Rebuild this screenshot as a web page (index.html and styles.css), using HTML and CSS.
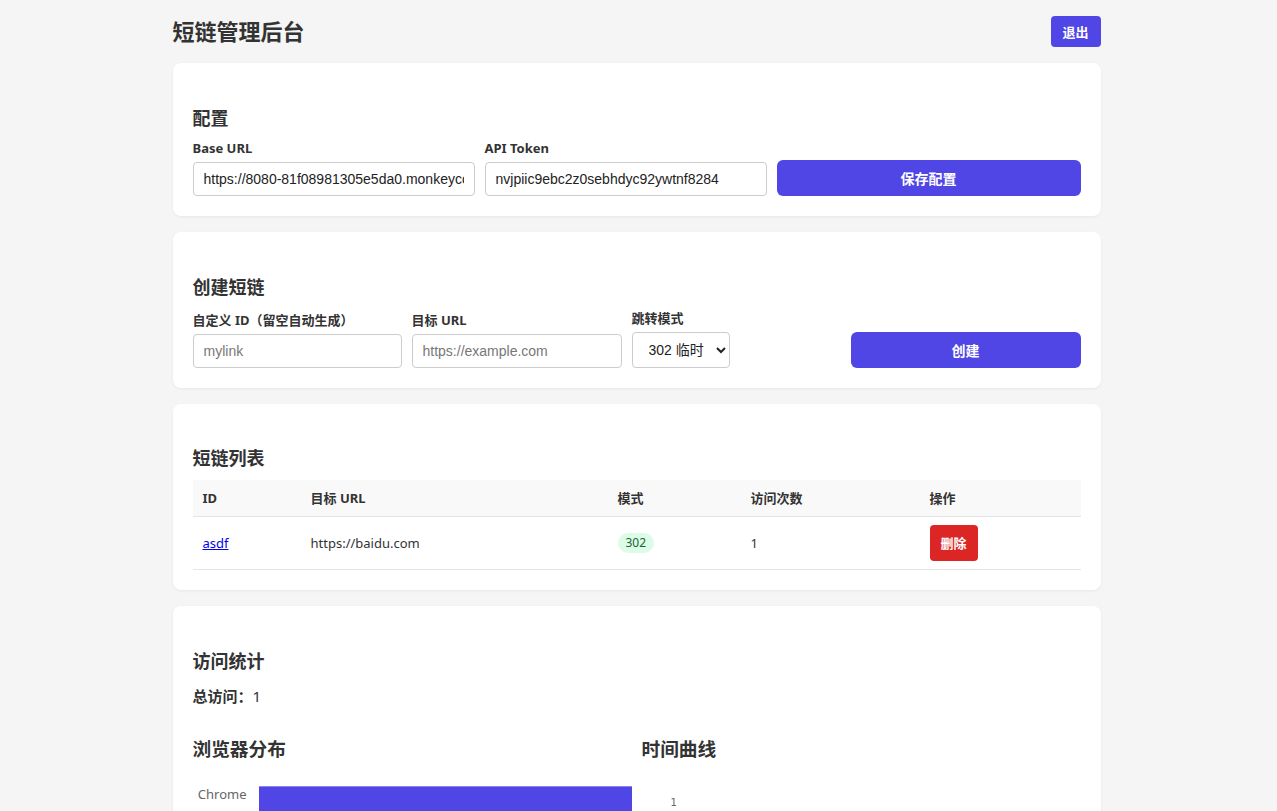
FILE: index.html
```html
<!DOCTYPE html>
<html lang="zh-CN">
<head>
    <meta charset="UTF-8">
    <meta name="viewport" content="width=device-width, initial-scale=1.0">
    <title>短链管理后台</title>
    <link rel="stylesheet" href="styles.css">
</head>
<body>
    <div class="container">
        <header class="top-bar">
            <h1>短链管理后台</h1>
            <button class="btn btn-small">退出</button>
        </header>

        <!-- 配置 -->
        <section class="card">
            <h2>配置</h2>
            <div class="form-row config-row">
                <div class="field">
                    <label>Base URL</label>
                    <input type="text" value="https://8080-81f08981305e5da0.monkeycode-ai.online">
                </div>
                <div class="field">
                    <label>API Token</label>
                    <input type="text" value="nvjpiic9ebc2z0sebhdyc92ywtnf8284">
                </div>
                <button class="btn btn-block">保存配置</button>
            </div>
        </section>

        <!-- 创建短链 -->
        <section class="card">
            <h2>创建短链</h2>
            <div class="form-row create-row">
                <div class="field field-id">
                    <label>自定义 ID（留空自动生成）</label>
                    <input type="text" placeholder="mylink">
                </div>
                <div class="field field-url">
                    <label>目标 URL</label>
                    <input type="text" placeholder="https://example.com">
                </div>
                <div class="field field-mode">
                    <label>跳转模式</label>
                    <select>
                        <option>302 临时</option>
                        <option>301 永久</option>
                    </select>
                </div>
                <button class="btn btn-block btn-create">创建</button>
            </div>
        </section>

        <!-- 短链列表 -->
        <section class="card">
            <h2 class="list-title">短链列表</h2>
            <table class="link-table">
                <thead>
                    <tr>
                        <th class="col-id">ID</th>
                        <th class="col-url">目标 URL</th>
                        <th class="col-mode">模式</th>
                        <th class="col-count">访问次数</th>
                        <th>操作</th>
                    </tr>
                </thead>
                <tbody>
                    <tr>
                        <td><a href="#">asdf</a></td>
                        <td>https://baidu.com</td>
                        <td><span class="badge">302</span></td>
                        <td>1</td>
                        <td><button class="btn btn-danger">删除</button></td>
                    </tr>
                </tbody>
            </table>
        </section>

        <!-- 访问统计 -->
        <section class="card">
            <h2>访问统计</h2>
            <p class="total"><strong>总访问：</strong>1</p>
            <div class="charts">
                <div class="chart-box">
                    <h3>浏览器分布</h3>
                    <div class="bar-chart">
                        <div class="bar-row">
                            <span class="bar-label">Chrome</span>
                            <div class="bar-track">
                                <div class="bar" style="width: 100%"></div>
                            </div>
                        </div>
                    </div>
                </div>
                <div class="chart-box">
                    <h3>时间曲线</h3>
                    <div class="line-chart">
                        <span class="tick">1</span>
                    </div>
                </div>
            </div>
        </section>
    </div>
</body>
</html>
```

FILE: styles.css
```css
/* Reset */
* {
    margin: 0;
    padding: 0;
    box-sizing: border-box;
}

body {
    font-family: 'Noto Sans', 'Noto Sans CJK SC', sans-serif;
    background-color: #f5f5f5;
    color: #333;
    font-size: 13px;
}

.container {
    width: 928px;
    margin: 0 auto;
    padding-top: 16px;
    position: relative;
    left: -2px;
}

/* Header */
.top-bar {
    display: flex;
    justify-content: space-between;
    align-items: center;
    margin-bottom: 16px;
}

h1 {
    font-size: 22px;
    font-weight: bold;
    line-height: 31px;
}

/* Buttons */
.btn {
    font-family: 'Noto Sans', 'Noto Sans CJK SC', sans-serif;
    background-color: #4f46e5;
    color: #fff;
    border: none;
    border-radius: 6px;
    font-weight: bold;
    cursor: pointer;
}

.btn-small {
    width: 50px;
    height: 31px;
    font-size: 13px;
    border-radius: 4px;
}

.btn-block {
    height: 36px;
    font-size: 14px;
}

.btn-danger {
    background-color: #dc2626;
    width: 48px;
    height: 36px;
    font-size: 13px;
    border-radius: 4px;
}

/* Cards */
.card {
    background-color: #fff;
    border-radius: 8px;
    padding: 20px;
    margin-bottom: 16px;
    box-shadow: 0 1px 3px rgba(0, 0, 0, 0.06);
}

h2 {
    font-size: 18px;
    font-weight: bold;
    line-height: 26px;
    margin: 22px 0 7px;
}

h2.list-title {
    margin: 21px 0 9px;
}

h3 {
    font-size: 18.7px;
    font-weight: bold;
    line-height: 26px;
}

/* Forms */
.form-row {
    display: flex;
    align-items: flex-end;
    gap: 10px;
}

.config-row .field {
    width: 282px;
}

.config-row .btn-block {
    flex: 1;
}

.create-row {
    padding-top: 1px;
}

.field {
    display: flex;
    flex-direction: column;
}

.field label {
    font-size: 13px;
    font-weight: bold;
    line-height: 21px;
    margin-bottom: 3px;
}

.field input,
.field select {
    font-family: 'Liberation Sans', 'Noto Sans CJK SC', sans-serif;
    font-size: 14px;
    color: #222;
    height: 34px;
    padding: 0 10px;
    border: 1px solid #ccc;
    border-radius: 4px;
    background: #fff;
}

.field input::placeholder {
    color: #777;
}

.field-id {
    width: 209px;
}

.field-url {
    width: 210px;
}

.field-mode {
    width: 98px;
}

.field-mode select {
    height: 36px;
    padding: 0 6px 0 12px;
}

.btn-create {
    width: 230px;
    margin-left: auto;
}

/* Table */
.link-table {
    width: 100%;
    border-collapse: collapse;
    font-size: 13px;
}

.link-table th {
    background-color: #f9f9f9;
    text-align: left;
    font-weight: bold;
    padding: 0 10px;
    height: 36px;
    border-bottom: 1px solid #e5e5e5;
}

.link-table td {
    padding: 8px 10px;
    border-bottom: 1px solid #e5e5e5;
    line-height: 18px;
}

.col-id { width: 108px; }
.col-url { width: 307px; }
.col-mode { width: 133px; }
.col-count { width: 179px; }

.link-table a {
    color: #0000ee;
}

.badge {
    display: inline-block;
    background-color: #dcfce7;
    color: #166534;
    font-size: 12px;
    line-height: 20px;
    padding: 0 8px;
    border-radius: 10px;
}

/* Stats */
.total {
    font-size: 15px;
    line-height: 20px;
    margin: 12px 0 30px;
}

.charts {
    display: grid;
    grid-template-columns: 1fr 1fr;
    gap: 10px;
}

.bar-chart {
    height: 220px;
    padding-top: 24px;
}

.bar-row {
    display: flex;
    height: 160px;
}

.bar-label {
    font-size: 13px;
    color: #666;
    width: 66px;
    text-align: right;
    padding-right: 12px;
    line-height: 17px;
}

.bar-track {
    flex: 1;
}

.bar {
    height: 100%;
    background-color: #4f46e5;
    border-top: 1px solid #8a84ee;
}

.line-chart {
    height: 220px;
    padding: 30px 0 0 29px;
}

.tick {
    font-family: 'DejaVu Sans', sans-serif;
    font-size: 10px;
    color: #666;
}
```
